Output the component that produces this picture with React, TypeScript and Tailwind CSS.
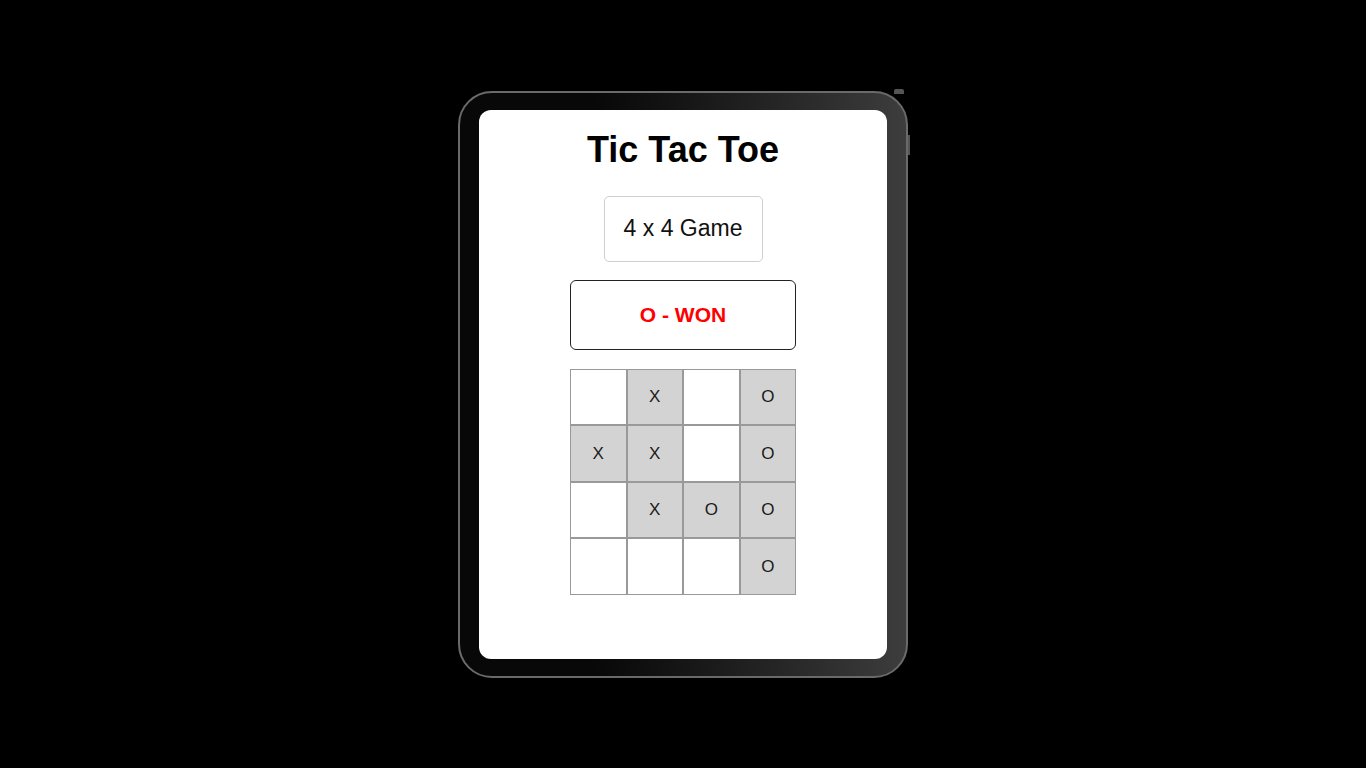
import { useState } from "react";

type Cell = "X" | "O" | "";

const initialBoard: Cell[] = [
  "", "X", "", "O",
  "X", "X", "", "O",
  "", "X", "O", "O",
  "", "", "", "O",
];

export default function App() {
  const [board] = useState<Cell[]>(initialBoard);
  const [size] = useState(4);

  return (
    <div
      className="w-full h-screen bg-black flex items-center justify-center"
      style={{ fontFamily: '"Liberation Sans", Arial, sans-serif' }}
    >
      {/* tablet frame */}
      <div className="relative w-[450px] h-[587px] rounded-[34px] border-2 border-[#6a6a6a] bg-linear-to-r from-[#080808] from-30% to-[#3d3d3d] px-[19px] py-[17px]">
        {/* side buttons */}
        <div className="absolute -right-[4px] top-[42px] w-[2px] h-[20px] bg-[#555]" />
        <div className="absolute right-[2px] -top-[4px] w-[10px] h-[5px] rounded-t-[2px] bg-[#555]" />

        <div className="w-full h-full bg-white rounded-[12px] flex flex-col items-center pt-[18px]">
          <h1 className="text-[36px] leading-[44px] font-bold text-black">
            Tic Tac Toe
          </h1>

          <button className="mt-[24px] w-[159px] h-[66px] border border-[#cfcfcf] rounded-[5px] bg-white text-[23px] text-[#111]">
            {size} x {size} Game
          </button>

          <div className="mt-[18px] w-[226px] h-[70px] border border-[#222] rounded-[6px] flex items-center justify-center">
            <span className="text-[21px] font-bold text-[#ff0000]">O - WON</span>
          </div>

          <div className="mt-[19px] grid grid-cols-4 w-[226px]">
            {board.map((cell, i) => (
              <div
                key={i}
                className={`h-[56.5px] border border-[#999] flex items-center justify-center text-[17px] text-[#1a1a1a] ${
                  cell ? "bg-[#d3d3d3]" : "bg-white"
                }`}
              >
                {cell}
              </div>
            ))}
          </div>
        </div>
      </div>
    </div>
  );
}
